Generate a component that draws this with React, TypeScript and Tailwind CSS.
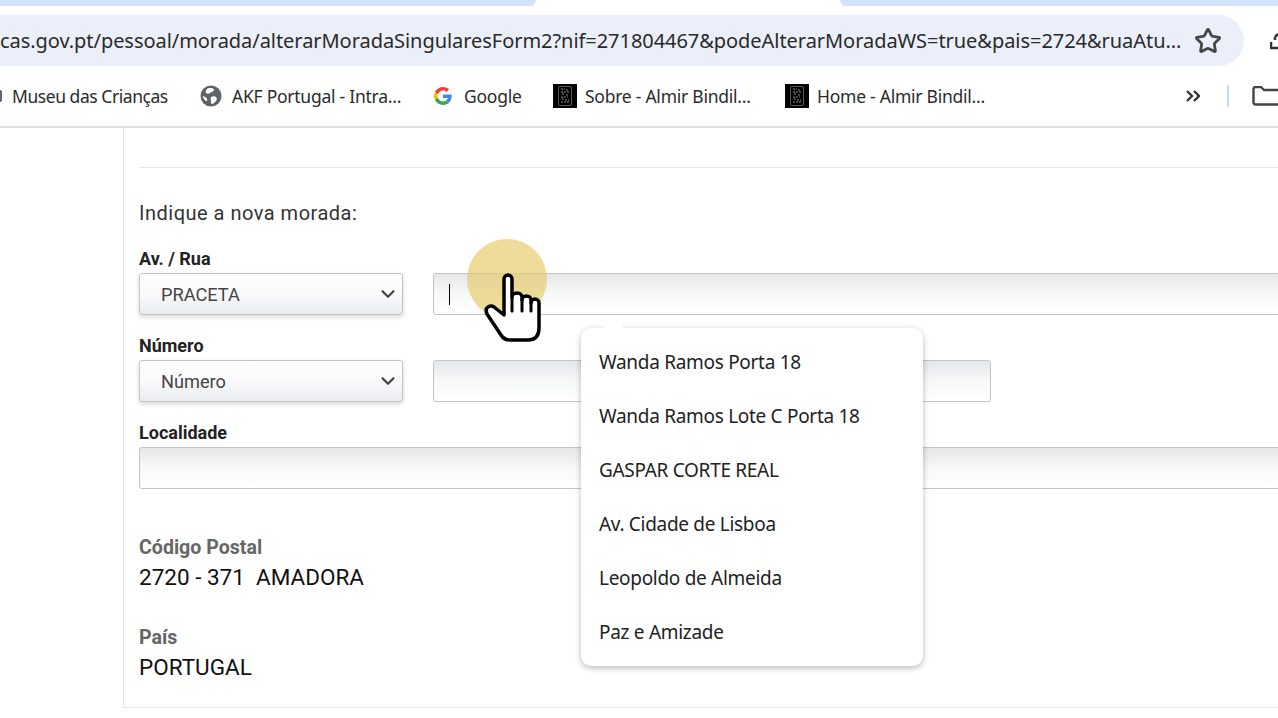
import { Star, ChevronDown } from "lucide-react";

const ui = "font-['Noto_Sans',sans-serif]";

function GoogleG() {
  return (
    <svg width="18" height="18" viewBox="0 0 48 48">
      <path fill="#EA4335" d="M24 9.500c3.500 0 6.700 1.200 9.200 3.600l6.900-6.900C35.900 2.400 30.400 0 24 0 14.600 0 6.500 5.400 2.600 13.200l8 6.200C12.500 13.700 17.800 9.500 24 9.500z" />
      <path fill="#4285F4" d="M47 24.500c0-1.600-.1-3.100-.4-4.500H24v9h12.900c-.6 3-2.200 5.500-4.700 7.200l7.700 6c4.500-4.200 7.100-10.300 7.100-17.700z" />
      <path fill="#FBBC05" d="M10.600 28.600c-.5-1.500-.8-3-.8-4.600s.3-3.100.8-4.600l-8-6.200C.9 16.500 0 20.100 0 24s.9 7.500 2.600 10.800l8-6.200z" />
      <path fill="#34A853" d="M24 48c6.500 0 11.900-2.100 15.900-5.800l-7.700-6c-2.200 1.500-5 2.300-8.200 2.300-6.200 0-11.500-4.200-13.400-9.900l-8 6.200C6.500 42.600 14.600 48 24 48z" />
    </svg>
  );
}

function GlobeIcon() {
  return (
    <svg width="22" height="22" viewBox="0 0 22 22">
      <circle cx="11" cy="11" r="10.500" fill="#5f6368" />
      <path fill="#fff" d="M10 3c2 0 4 .5 4 2s-3 2-4 3-3 1-4 0 0-3 1-4 1.500-1 3-1zM11 12c2-1 4-1 5 0s1 3 0 4-3 3-4 3-1-2-1-3-1-3 0-4zM2.500 11c1 0 3 1 4 2s1 3 0 3-3-2-4-5z" />
    </svg>
  );
}

function SiteIcon() {
  return (
    <svg className="shrink-0" width="24" height="24" viewBox="0 0 24 24">
      <rect width="24" height="24" fill="#000" />
      <rect x="5.500" y="2.500" width="13" height="19" rx="1.500" fill="none" stroke="#5a5a5a" />
      <path d="M8 5h4M13 6h3M8 8h8M9 10h3M13 11h3M8 13h7M9 15h2M12 16h4M8 18h8" stroke="#8a8a8a" strokeWidth="1" strokeDasharray="2 1" />
    </svg>
  );
}

function SelectBox({ value }: { value: string }) {
  return (
    <div className="w-[264px] h-[42px] flex items-center justify-between pl-[21px] pr-[3px] rounded-[3px] border border-[#c4c4c4] bg-gradient-to-b from-white via-[#fafafb] to-[#e9ebee] shadow-[0_2px_5px_rgba(0,0,0,0.16)] text-[18.200px] text-[#444]">
      <span className="pt-[1px]">{value}</span>
      <ChevronDown size={22} strokeWidth={2.400} className="text-[#444]" />
    </div>
  );
}

const inputClass =
  "h-[42px] rounded-[3px] border border-[#c4c4c4] bg-gradient-to-b from-[#e6e7e9] via-[#f7f8f8] to-white";

const suggestions = [
  "Wanda Ramos Porta 18",
  "Wanda Ramos Lote C Porta 18",
  "GASPAR CORTE REAL",
  "Av. Cidade de Lisboa",
  "Leopoldo de Almeida",
  "Paz e Amizade",
];

export default function App() {
  return (
    <div className="relative w-[1278px] h-[718px] overflow-hidden bg-white font-['Roboto',sans-serif]">
      {/* tab strip */}
      <div className="h-[15px] flex justify-between items-start">
        <div className="w-[536px] h-[6px] bg-[#d3e3fd] rounded-br-[8px]" />
        <div className="w-[438px] h-[6px] bg-[#d3e3fd] rounded-bl-[8px]" />
      </div>

      {/* address bar */}
      <div className="h-[51px] flex items-center">
        <div className="w-[1245px] h-[51px] bg-[#ebeff9] rounded-r-[26px] flex items-center overflow-hidden">
          <div className={`${ui} w-[1183px] shrink-0 overflow-hidden whitespace-nowrap text-[20px] text-[#2a2a2a] tracking-[-0.05px]`}>
            cas.gov.pt/pessoal/morada/alterarMoradaSingularesForm2?nif=271804467&amp;podeAlterarMoradaWS=true&amp;pais=2724&amp;ruaAtu...
          </div>
          <Star size={28} strokeWidth={2.400} className="ml-[11px] shrink-0 text-[#474747]" />
        </div>
        <svg className="ml-[26px] shrink-0" width="8" height="18" viewBox="0 0 8 18" fill="none" stroke="#333" strokeWidth="2.500">
          <path d="M5 5 L8 2 M5 5 V8 M1 10 V16 H8" />
        </svg>
      </div>

      {/* bookmark bar */}
      <div className={`${ui} h-[62px] border-b-2 border-[#dedede] flex items-center overflow-hidden text-[17.500px] text-[#2b2b2b] tracking-[-0.25px] whitespace-nowrap [&>*]:shrink-0`}>
        <span className="w-[2px] h-[12px] rounded-r-full bg-[#5f6368] mr-[10px]" />
        <span className="w-[188px] tracking-[-0.45px]">Museu das Crianças</span>
        <GlobeIcon />
        <span className="ml-[10px] w-[202px]">AKF Portugal - Intra...</span>
        <GoogleG />
        <span className="ml-[12px] w-[89px]">Google</span>
        <SiteIcon />
        <span className="ml-[8px] w-[200px]">Sobre - Almir Bindil...</span>
        <SiteIcon />
        <span className="ml-[8px] w-[369px]">Home - Almir Bindil...</span>
        <svg width="14" height="12" viewBox="0 0 14 12" fill="none" stroke="#333" strokeWidth="2.300">
          <path d="M1 1 L6 6 L1 11 M8 1 L13 6 L8 11" />
        </svg>
        <span className="ml-[27px] w-[2px] h-[22px] rounded-full bg-[#c7dcf8]" />
        <svg className="ml-[23px]" width="30" height="20" viewBox="0 0 30 20" fill="none" stroke="#444" strokeWidth="2.400" strokeLinejoin="round">
          <path d="M1.500 3 a2 2 0 0 1 2 -2 H9 l3 3 H28 V18.500 H3.500 a2 2 0 0 1 -2 -2 Z" />
        </svg>
      </div>

      {/* page card */}
      <div className="pl-[123px]">
        <div className="h-[580px] border-l border-b border-[#e6e6e6] pl-[15px] text-[#222]">
          <div className="h-[40px] border-b border-[#e6e6e6]" />
          <div className="mt-[33px] text-[20px] leading-[24px] tracking-[0.5px] text-[#333]">Indique a nova morada:</div>

          <div className="mt-[24px] text-[18px] leading-[20px] font-bold">Av. / Rua</div>
          <div className="mt-[4px] flex gap-[30px] w-[1200px]">
            <SelectBox value="PRACETA" />
            <div className={`${inputClass} flex-1 flex items-center pl-[15px]`}>
              <span className="w-px h-[21px] bg-black" />
            </div>
          </div>

          <div className="mt-[21px] text-[18px] leading-[20px] font-bold">Número</div>
          <div className="mt-[4px] flex gap-[30px]">
            <SelectBox value="Número" />
            <div className={`${inputClass} w-[558px]`} />
          </div>

          <div className="mt-[21px] text-[18px] leading-[20px] font-bold">Localidade</div>
          <div className={`${inputClass} mt-[4px] w-[1200px]`} />

          <div className="mt-[48px] text-[19.600px] leading-[22px] font-bold text-[#666]">Código Postal</div>
          <div className="mt-[5px] text-[22.500px] leading-[26px] text-[#111] whitespace-pre">2720 - 371  AMADORA</div>

          <div className="mt-[37px] text-[19.600px] leading-[22px] font-bold text-[#666]">País</div>
          <div className="mt-[5px] text-[22.500px] leading-[26px] text-[#111]">PORTUGAL</div>
        </div>
      </div>

      {/* autocomplete menu */}
      <div className={`${ui} absolute left-[581px] top-[328px] w-[342px] h-[338px] rounded-[10px] bg-white py-[7px] shadow-[0_2px_6px_rgba(0,0,0,0.28)] text-[19px] text-[#222] tracking-[-0.3px]`}>
        <div className="absolute left-[22px] -top-[7px] w-[20px] h-[8px] bg-white" />
        {suggestions.map((s) => (
          <div key={s} className="h-[54px] flex items-center pl-[18px]">{s}</div>
        ))}
      </div>

      {/* cursor highlight */}
      <div className="absolute left-[467px] top-[239px] w-[80px] h-[80px] rounded-full bg-[#e6c965]/65" />
      <svg className="absolute left-[480px] top-[270px]" width="65" height="75" viewBox="480 270 65 75">
        <path
          d="M504 315 V279 a4 4 0 0 1 8 0 V297 a5 4 0 0 1 10 0 V300 a4.500 4 0 0 1 9 0 V303 a4 4 0 0 1 8 0 V328 q0 12 -11 12 H510 q-6 0 -9 -5 L487 314 q-2 -5 1 -7 q3 -2 6 0 L504 315 Z"
          fill="#fff"
          stroke="#000"
          strokeWidth="3.500"
          strokeLinejoin="round"
        />
        <path d="M512 297 V311 M522 300 V311 M531 303 V311" stroke="#000" strokeWidth="3" strokeLinecap="round" fill="none" />
      </svg>
    </div>
  );
}
